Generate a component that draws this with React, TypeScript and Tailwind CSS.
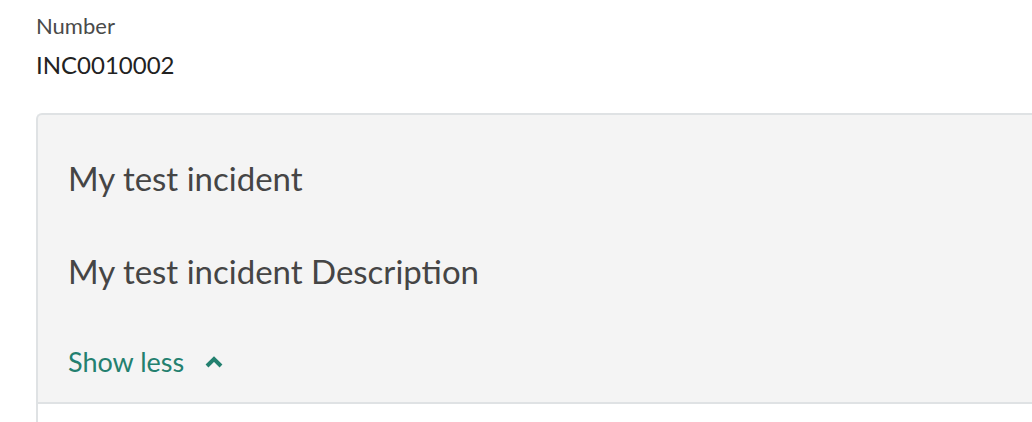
export default function App() {
  return (
    <div className="min-h-[422px] w-[1032px] overflow-hidden bg-white pl-9 pt-[14px] font-['Lato',sans-serif]">
      <div className="text-[22px] leading-[24px] text-[#4a4a4a]">Number</div>
      <div className="mt-[13px] text-[24px] leading-[28px] text-[#222]">INC0010002</div>

      <div className="mt-[34px] w-[1010px] rounded-tl-[6px] border-l-2 border-t-2 border-[#dfe2e4] bg-[#f4f4f4]">
        <div className="pl-[30px] pt-[43px] text-[33px] leading-[40px] text-[#454545]">My test incident</div>
        <div className="pl-[30px] pt-[53px] text-[33px] leading-[40px] text-[#454545]">My test incident Description</div>
        <button className="ml-[30px] mt-[56px] flex items-center gap-[21px] text-[27px] leading-[30px] text-[#23806f]">
          Show less
          <svg width="18" height="12" viewBox="0 0 18 12" fill="none">
            <path d="M2 10 L9 3 L16 10" stroke="currentColor" strokeWidth="4" />
          </svg>
        </button>
        <div className="mt-[25px] border-b-2 border-[#dfe2e4]" />
      </div>
      <div className="h-5 border-l-2 border-[#dfe2e4] bg-white" />
    </div>
  );
}
